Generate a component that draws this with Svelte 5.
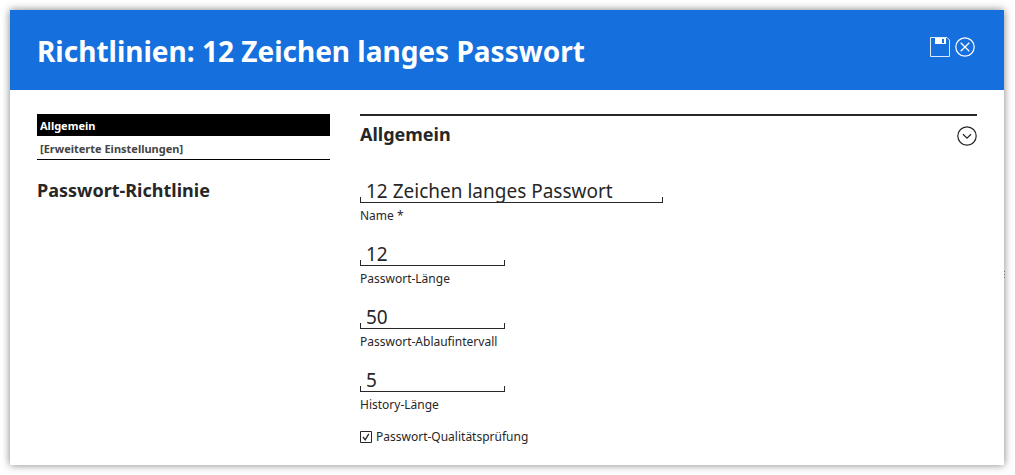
<script>
  let fields = $state([
    { id: 'name', label: 'Name *', value: '12 Zeichen langes Passwort', wide: true },
    { id: 'length', label: 'Passwort-Länge', value: '12' },
    { id: 'expiry', label: 'Passwort-Ablaufintervall', value: '50' },
    { id: 'history', label: 'History-Länge', value: '5' }
  ]);
  let quality = $state(true);
  let open = $state(true);
</script>

<div class="dialog">
  <header>
    <h1>Richtlinien: 12 Zeichen langes Passwort</h1>
    <div class="actions">
      <button type="button" aria-label="Speichern">
        <svg width="20" height="20" viewBox="0 0 20 20">
          <path d="M.5.5H17L19.5 3V19.5H.5Z" fill="none" stroke="currentColor" stroke-opacity=".85" />
          <path d="M5 1H16V7H5Z" fill="currentColor" />
          <path d="M12 2H14V6H12Z" fill="#156fdd" />
        </svg>
      </button>
      <button type="button" aria-label="Schließen">
        <svg width="20" height="20" viewBox="0 0 20 20" fill="none" stroke="currentColor">
          <circle cx="10" cy="10" r="9.2" stroke-width="1.2" />
          <path d="M5.7 5.7L14.3 14.3M14.3 5.7L5.7 14.3" stroke-width="1.3" />
        </svg>
      </button>
    </div>
  </header>

  <div class="body">
    <aside>
      <nav>
        <a class="active" href="#allgemein">Allgemein</a>
        <a href="#erweitert">[Erweiterte Einstellungen]</a>
      </nav>
      <h2>Passwort-Richtlinie</h2>
    </aside>

    <main id="allgemein">
      <div class="section-head">
        <h2>Allgemein</h2>
        <button type="button" aria-label="Abschnitt umschalten" aria-expanded={open} onclick={() => (open = !open)}>
          <svg width="20" height="20" viewBox="0 0 20 20" fill="none" stroke="currentColor">
            <circle cx="10" cy="10" r="9.2" stroke-width="1.2" />
            <path d="M6 8.2L10 12.2L14 8.2" stroke-width="1.3" />
          </svg>
        </button>
      </div>
      {#if open}
        <form>
          {#each fields as field (field.id)}
            <div class="field" class:wide={field.wide}>
              <input id={field.id} type="text" bind:value={field.value} />
              <label for={field.id}>{field.label}</label>
            </div>
          {/each}
          <label class="check">
            <input type="checkbox" bind:checked={quality} />
            <svg width="12" height="12" viewBox="0 0 12 12" fill="none" stroke="currentColor">
              <path d="M.5.5H11.5V11.5H.5Z" />
              {#if quality}
                <path d="M3 6L5.2 8.8L8.8 2.8" stroke-width="1.3" />
              {/if}
            </svg>
            <span>Passwort-Qualitätsprüfung</span>
          </label>
        </form>
      {/if}
    </main>
  </div>
  <div class="grip"><i></i><i></i><i></i></div>
</div>

<style>
  :global(body) {
    background: #fff;
  }
  .dialog {
    position: relative;
    margin: 10px 11px 10px 10px;
    background: #fff;
    color: #272727;
    box-shadow: 0 0 8px rgba(0, 0, 0, 0.5);
    font-family: 'Noto Sans', 'Open Sans', sans-serif;
    font-size: 12px;
    line-height: 16px;
  }
  header {
    display: flex;
    justify-content: space-between;
    align-items: center;
    box-sizing: border-box;
    min-height: 80px;
    padding: 1px 29px 0 27px;
    background: #156fdd;
    color: #fff;
  }
  h1,
  h2 {
    margin: 0;
    font-weight: 700;
  }
  h1 {
    font-size: 28px;
    line-height: 40px;
  }
  h2 {
    font-size: 18px;
    line-height: 26px;
  }
  button {
    display: block;
    padding: 0;
    border: 0;
    background: none;
    color: inherit;
    cursor: pointer;
  }
  svg {
    display: block;
    flex: none;
  }
  .actions {
    display: flex;
    gap: 5px;
    padding-bottom: 7px;
  }
  .body {
    display: flex;
    gap: 30px;
    padding: 24px 27px 21px;
  }
  aside {
    flex: 0 0 293px;
  }
  nav {
    margin-bottom: 17px;
    border-bottom: 1px solid #000;
  }
  nav a {
    display: block;
    padding: 5px 3px 2px;
    color: #444;
    font-size: 11px;
    font-weight: 700;
    line-height: 16px;
    text-decoration: none;
  }
  nav a.active {
    padding: 4px 3px 2px;
    background: #000;
    color: #fff;
  }
  main {
    flex: 1;
    min-width: 0;
    border-top: 2px solid #272727;
  }
  .section-head {
    display: flex;
    justify-content: space-between;
    align-items: flex-end;
    padding-top: 5px;
    margin-bottom: 31px;
  }
  .section-head button {
    padding-bottom: 1px;
  }
  .field {
    width: 145px;
    margin-bottom: 17px;
  }
  .wide {
    width: 303px;
  }
  .field input {
    display: block;
    box-sizing: border-box;
    width: 100%;
    height: 25px;
    margin-bottom: 5px;
    padding: 2px 6px 0;
    border: 0;
    border-bottom: 1px solid #272727;
    background:
      linear-gradient(#272727, #272727) left bottom / 1px 5px no-repeat,
      linear-gradient(#272727, #272727) right bottom / 1px 5px no-repeat;
    color: inherit;
    font: 19px/22px 'Noto Sans', 'Open Sans', sans-serif;
    outline: 0;
  }
  .field label {
    display: block;
  }
  .check {
    display: flex;
    align-items: center;
    gap: 4px;
    width: max-content;
    line-height: 14px;
  }
  .check input {
    position: absolute;
    opacity: 0;
    margin: 0;
  }
  .grip {
    position: absolute;
    top: 261px;
    right: -1px;
    display: grid;
    gap: 2px;
  }
  .grip i {
    width: 1px;
    height: 1px;
    background: #777;
  }
</style>
